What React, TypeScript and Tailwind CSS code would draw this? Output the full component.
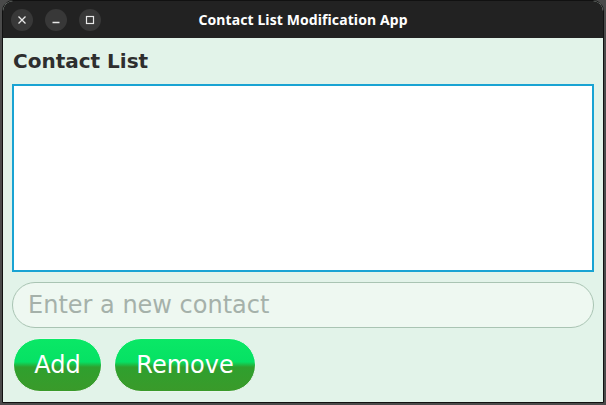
import React from 'react';

const glossy =
  'bg-[linear-gradient(to_bottom,#0ae866_0%,#06e164_44%,#2fa02e_54%,#3a9a2a_100%)]';

function TitleButton({ children }: { children: React.ReactNode }) {
  return (
    <div className="w-[22px] h-[22px] rounded-full bg-[#383838] flex items-center justify-center text-[#e8e8e8]">
      {children}
    </div>
  );
}

export default function App() {
  return (
    <div className="w-[606px] h-[405px] bg-[#4a4a4a] overflow-hidden pl-[2px]">
      <div className="w-[602px] h-[403px] rounded-t-[11px] border border-[#111] bg-[#e2f3e9] flex flex-col overflow-hidden">
        {/* Title bar */}
        <div className="h-[37px] shrink-0 bg-[#222222] relative flex items-center px-[8px] gap-[12px]">
          <TitleButton>
            <svg width="10" height="10" viewBox="0 0 10 10" stroke="currentColor" strokeWidth="1.3">
              <path d="M1.5 1.5 L8.5 8.5 M8.5 1.5 L1.5 8.5" />
            </svg>
          </TitleButton>
          <TitleButton>
            <svg width="10" height="10" viewBox="0 0 10 10" stroke="currentColor" strokeWidth="1.3">
              <path d="M1.5 7.5 H8.5" />
            </svg>
          </TitleButton>
          <TitleButton>
            <svg width="10" height="10" viewBox="0 0 10 10" fill="none" stroke="currentColor" strokeWidth="1.2">
              <rect x="1.5" y="1.5" width="7" height="7" />
            </svg>
          </TitleButton>
          <div className="absolute inset-0 flex items-center justify-center pointer-events-none">
            <span className="text-white font-bold text-[14px] font-['Noto_Sans',sans-serif] tracking-[0.1px]">
              Contact List Modification App
            </span>
          </div>
        </div>

        {/* Content */}
        <div className="flex flex-col px-[9px] pt-[10px]">
          <h1 className="font-['DejaVu_Sans',sans-serif] font-bold text-[20px] text-[#2e2e2e] leading-[26px] pl-[1px]">
            Contact List
          </h1>
          <div className="mt-[10px] h-[188px] bg-white border-2 border-[#19a3d3]" />
          <input
            className="mt-[10px] h-[46px] rounded-full bg-[#eef8f1] border border-[#a9c4b3] px-[15px] text-[24px] font-['DejaVu_Sans',sans-serif] placeholder:text-[#a5b1aa] outline-none"
            placeholder="Enter a new contact"
          />
          <div className="mt-[10px] flex gap-[12px] pl-[1px]">
            <button
              className={`h-[54px] w-[89px] rounded-full border border-[#eaf6ee] ${glossy} text-white text-[24px] font-['DejaVu_Sans',sans-serif]`}
            >
              Add
            </button>
            <button
              className={`h-[54px] w-[142px] rounded-full border border-[#eaf6ee] ${glossy} text-white text-[24px] font-['DejaVu_Sans',sans-serif]`}
            >
              Remove
            </button>
          </div>
        </div>
      </div>
    </div>
  );
}
